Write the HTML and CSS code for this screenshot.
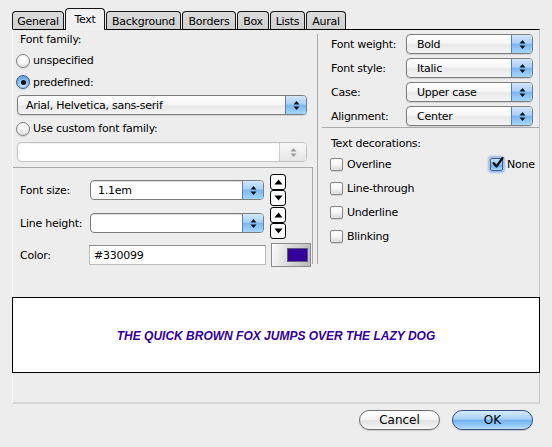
FILE: index.html
```html
<!DOCTYPE html>
<html>
<head>
<meta charset="utf-8">
<title>Text style</title>
<link rel="stylesheet" href="styles.css">
</head>
<body>
<div class="dialog">
  <div class="tabs">
    <div class="tab t-general">General</div>
    <div class="tab t-text active">Text</div>
    <div class="tab t-bg">Background</div>
    <div class="tab t-borders">Borders</div>
    <div class="tab t-box">Box</div>
    <div class="tab t-lists">Lists</div>
    <div class="tab t-aural">Aural</div>
  </div>
  <div class="panel">
    <div class="cols">
      <div class="left">
        <div class="family">
          <div class="label">Font family:</div>
          <label class="radio-row r1"><span class="radio"></span>unspecified</label>
          <label class="radio-row r2"><span class="radio on"></span>predefined:</label>
          <div class="popup wide"><span class="val">Arial, Helvetica, sans-serif</span><span class="arrows"><svg width="7" height="11" viewBox="0 0 7 11"><path d="M0.5 4.5 L3.5 1 L6.5 4.5 Z M0.5 6.5 L3.5 10 L6.5 6.5 Z" fill="#111"/></svg></span></div>
          <label class="radio-row r3"><span class="radio"></span>Use custom font family:</label>
          <div class="combo wide disabled"><span class="field"></span><span class="arrows gray"><svg width="7" height="11" viewBox="0 0 7 11"><path d="M0.5 4.5 L3.5 1 L6.5 4.5 Z M0.5 6.5 L3.5 10 L6.5 6.5 Z" fill="#9a9a9a"/></svg></span></div>
        </div>
        <div class="sizes">
          <div class="size-row">
            <span class="lbl">Font size:</span>
            <div class="combo size"><span class="field">1.1em</span><span class="arrows"><svg width="7" height="11" viewBox="0 0 7 11"><path d="M0.5 4.5 L3.5 1 L6.5 4.5 Z M0.5 6.5 L3.5 10 L6.5 6.5 Z" fill="#111"/></svg></span></div>
            <div class="steppers"><span class="step"><svg width="9" height="6" viewBox="0 0 9 6"><path d="M0.5 5.5 L4.5 0.5 L8.5 5.5 Z" fill="#000"/></svg></span><span class="step"><svg width="9" height="6" viewBox="0 0 9 6"><path d="M0.5 0.5 L4.5 5.5 L8.5 0.5 Z" fill="#000"/></svg></span></div>
          </div>
          <div class="size-row lh">
            <span class="lbl">Line height:</span>
            <div class="combo size"><span class="field"></span><span class="arrows"><svg width="7" height="11" viewBox="0 0 7 11"><path d="M0.5 4.5 L3.5 1 L6.5 4.5 Z M0.5 6.5 L3.5 10 L6.5 6.5 Z" fill="#111"/></svg></span></div>
            <div class="steppers"><span class="step"><svg width="9" height="6" viewBox="0 0 9 6"><path d="M0.5 5.5 L4.5 0.5 L8.5 5.5 Z" fill="#000"/></svg></span><span class="step"><svg width="9" height="6" viewBox="0 0 9 6"><path d="M0.5 0.5 L4.5 5.5 L8.5 0.5 Z" fill="#000"/></svg></span></div>
          </div>
          <div class="color-row">
            <span class="lbl">Color:</span>
            <div class="textfield">#330099</div>
            <div class="colorbtn"><span class="swatch"></span></div>
          </div>
        </div>
      </div>
      <div class="right">
        <div class="props">
          <div class="prop-row"><span class="plbl">Font weight:</span><div class="popup small"><span class="val">Bold</span><span class="arrows"><svg width="7" height="11" viewBox="0 0 7 11"><path d="M0.5 4.5 L3.5 1 L6.5 4.5 Z M0.5 6.5 L3.5 10 L6.5 6.5 Z" fill="#111"/></svg></span></div></div>
          <div class="prop-row"><span class="plbl">Font style:</span><div class="popup small"><span class="val">Italic</span><span class="arrows"><svg width="7" height="11" viewBox="0 0 7 11"><path d="M0.5 4.5 L3.5 1 L6.5 4.5 Z M0.5 6.5 L3.5 10 L6.5 6.5 Z" fill="#111"/></svg></span></div></div>
          <div class="prop-row"><span class="plbl">Case:</span><div class="popup small"><span class="val">Upper case</span><span class="arrows"><svg width="7" height="11" viewBox="0 0 7 11"><path d="M0.5 4.5 L3.5 1 L6.5 4.5 Z M0.5 6.5 L3.5 10 L6.5 6.5 Z" fill="#111"/></svg></span></div></div>
          <div class="prop-row"><span class="plbl">Alignment:</span><div class="popup small"><span class="val">Center</span><span class="arrows"><svg width="7" height="11" viewBox="0 0 7 11"><path d="M0.5 4.5 L3.5 1 L6.5 4.5 Z M0.5 6.5 L3.5 10 L6.5 6.5 Z" fill="#111"/></svg></span></div></div>
        </div>
        <div class="sep"></div>
        <div class="deco">
          <div class="deco-title">Text decorations:</div>
          <div class="deco-row">
            <label class="check-item first"><span class="check"></span>Overline</label>
            <label class="check-item"><span class="check on"><svg width="13" height="12" viewBox="0 0 13 12"><path d="M2.5 6 L5.5 9.5 L11.5 1" fill="none" stroke="#111" stroke-width="2.2" stroke-linecap="round" stroke-linejoin="round"/></svg></span>None</label>
          </div>
          <div class="deco-row"><label class="check-item first"><span class="check"></span>Line-through</label></div>
          <div class="deco-row"><label class="check-item first"><span class="check"></span>Underline</label></div>
          <div class="deco-row"><label class="check-item first"><span class="check"></span>Blinking</label></div>
        </div>
      </div>
    </div>
    <div class="preview"><span class="sample">The quick brown fox jumps over the lazy dog</span></div>
  </div>
  <div class="buttons">
    <button class="btn">Cancel</button>
    <button class="btn ok">OK</button>
  </div>
</div>
</body>
</html>
```

FILE: styles.css
```css
html, body {
  margin: 0;
  padding: 0;
}
body {
  background: #ededed;
  font-family: "DejaVu Sans", "Noto Sans", sans-serif;
  font-size: 11px;
  letter-spacing: -0.25px;
  color: #000;
}
.dialog {
  width: 552px;
  height: 447px;
  overflow: hidden;
}

/* tabs */
.tabs {
  display: flex;
  align-items: flex-end;
  height: 21px;
  margin-top: 8px;
  padding-left: 12px;
  position: relative;
  z-index: 2;
}
.tab {
  box-sizing: border-box;
  height: 18px;
  border: 1px solid #161616;
  border-bottom: none;
  border-radius: 4px 4px 0 0;
  background: linear-gradient(#dcdcdc, #d0d0d0);
  display: flex;
  align-items: center;
  justify-content: center;
  margin-right: 1px;
  padding-top: 1px;
}
.tab.active {
  height: 22px;
  margin-bottom: -1px;
  background: #f1f1f1;
  padding-bottom: 2px;
}
.t-general { width: 52px; }
.t-text { width: 40px; }
.t-bg { width: 75px; }
.t-borders { width: 54px; }
.t-box { width: 32px; }
.t-lists { width: 35px; }
.t-aural { width: 40px; }

/* panel */
.panel {
  box-sizing: border-box;
  margin-left: 12px;
  width: 528px;
  height: 375px;
  border-top: 1px solid #000;
  border-left: 1px solid #fafafa;
  border-right: 1px solid #c6c6c6;
  border-bottom: 2px solid #d6d6d6;
  display: flex;
  flex-direction: column;
}
.cols {
  display: flex;
  height: 234px;
}
.left {
  width: 300px;
  display: flex;
  flex-direction: column;
}
.family {
  box-sizing: border-box;
  height: 138px;
  border-bottom: 1px solid #a9a9a9;
  display: flex;
  flex-direction: column;
}
.label {
  height: 20px;
  line-height: 20px;
  padding-left: 7px;
}
.radio-row {
  display: flex;
  align-items: center;
  gap: 3px;
  padding-left: 3px;
  height: 21px;
}
.r2 { height: 22px; }
.r3 { margin-top: 3px; }
.radio {
  box-sizing: border-box;
  width: 14px;
  height: 14px;
  border-radius: 50%;
  border: 1px solid #838383;
  background: radial-gradient(circle at 50% 30%, #ffffff 0%, #f4f4f4 45%, #d2d2d2 100%);
  box-shadow: 0 1px 1px rgba(0,0,0,0.12);
  display: flex;
  align-items: center;
  justify-content: center;
}
.radio.on {
  border-color: #3f5f8e;
  background: radial-gradient(circle at 50% 75%, #cfe8ff 0%, #7fb6ec 55%, #4f8fd6 100%);
}
.radio.on::after {
  content: "";
  width: 5px;
  height: 5px;
  border-radius: 50%;
  background: #111;
}

/* popup buttons */
.popup {
  box-sizing: border-box;
  height: 20px;
  border: 1px solid #7d7d7d;
  border-radius: 4px;
  background: linear-gradient(#ffffff 0%, #f6f6f6 45%, #e9e9e9 55%, #f3f3f3 100%);
  display: flex;
  align-items: center;
  overflow: hidden;
  box-shadow: 0 1px 1px rgba(0,0,0,0.12);
}
.popup .val {
  flex: 1;
  padding-left: 10px;
  white-space: nowrap;
}
.popup.wide {
  width: 290px;
  margin-left: 4px;
  margin-top: 2px;
}
.popup.wide .val { padding-left: 8px; }
.arrows {
  width: 20px;
  height: 100%;
  display: flex;
  align-items: center;
  justify-content: center;
  border-left: 1px solid #5b7fb2;
  background: linear-gradient(#d2e8fd 0%, #a8d0f7 45%, #7ab7f1 52%, #a6d6fc 100%);
}
.arrows.gray {
  border-left: 1px solid #d0d0d0;
  background: linear-gradient(#f8f8f8, #e6e6e6);
}

/* combo boxes */
.combo {
  box-sizing: border-box;
  height: 20px;
  display: flex;
  border: 1px solid #7d7d7d;
  border-radius: 4px;
  overflow: hidden;
  background: #fff;
}
.combo .field {
  flex: 1;
  display: flex;
  align-items: center;
  padding-left: 7px;
  box-shadow: inset 0 1px 1px rgba(0,0,0,0.15);
}
.combo.wide {
  width: 290px;
  margin-left: 4px;
  margin-top: 3px;
}
.combo.disabled {
  border-color: #c3c3c3;
}
.combo.disabled .field {
  box-shadow: inset 0 1px 1px rgba(0,0,0,0.06);
}
.combo.disabled .arrows {
  width: 26px;
}
.combo.size {
  width: 174px;
}

/* sizes */
.sizes {
  box-sizing: border-box;
  width: 300px;
  height: 96px;
  border-right: 1px solid #a9a9a9;
  padding-top: 6px;
  display: flex;
  flex-direction: column;
}
.size-row {
  height: 32px;
  display: flex;
  align-items: center;
  padding-left: 7px;
}
.size-row.lh {
  margin-top: 1px;
}
.lbl {
  width: 70px;
  flex: none;
}
.steppers {
  display: flex;
  flex-direction: column;
  margin-left: 6px;
}
.step {
  box-sizing: border-box;
  width: 16px;
  height: 16px;
  border: 1px solid #000;
  border-radius: 3px;
  background: #fff;
  display: flex;
  align-items: center;
  justify-content: center;
}
.step + .step {
  margin-top: 0;
}
.color-row {
  margin-top: 4px;
  height: 24px;
  display: flex;
  align-items: center;
  padding-left: 7px;
}
.textfield {
  box-sizing: border-box;
  width: 177px;
  height: 20px;
  margin-left: -1px;
  border: 1px solid #bcbcbc;
  border-top-color: #8e8e8e;
  background: #fff;
  padding-left: 4px;
  display: flex;
  align-items: center;
}
.colorbtn {
  box-sizing: border-box;
  width: 40px;
  height: 24px;
  margin-left: 5px;
  border: 1px solid #8a8a8a;
  background: linear-gradient(100deg, #fbfbfb 0%, #dedede 40%, #b9b9b9 100%);
  display: flex;
  align-items: center;
  justify-content: flex-end;
  padding-right: 3px;
}
.swatch {
  width: 19px;
  height: 12px;
  background: #330099;
  box-shadow: 0 0 0 1px #5e5e7a;
}

/* right column */
.right {
  box-sizing: border-box;
  flex: 1;
  margin-left: 4px;
  margin-top: 4px;
  height: 230px;
  border-left: 1px solid #a9a9a9;
  display: flex;
  flex-direction: column;
}
.props {
  padding-left: 13px;
  display: flex;
  flex-direction: column;
  gap: 4px;
}
.prop-row {
  height: 20px;
  display: flex;
  align-items: center;
}
.plbl {
  width: 75px;
  flex: none;
}
.popup.small {
  width: 127px;
}
.sep {
  margin: 1px 0 0 4px;
  border-top: 1px solid #a9a9a9;
}
.deco {
  padding-top: 8px;
  padding-left: 12px;
  display: flex;
  flex-direction: column;
}
.deco-title {
  height: 16px;
  line-height: 16px;
  padding-left: 1px;
}
.deco-row {
  height: 24px;
  display: flex;
  align-items: center;
}
.check-item {
  display: flex;
  align-items: center;
  gap: 4px;
}
.check-item.first {
  width: 160px;
}
.check {
  box-sizing: border-box;
  width: 13px;
  height: 13px;
  border: 1px solid #878787;
  border-radius: 2px;
  background: linear-gradient(#ffffff 0%, #f3f3f3 50%, #dcdcdc 100%);
  box-shadow: 0 1px 1px rgba(0,0,0,0.12);
  position: relative;
}
.check.on {
  border-color: #3e5e93;
  background: linear-gradient(#c9e2fb 0%, #8cc0f2 50%, #6aa8ea 55%, #a7d3fb 100%);
  box-shadow: 0 0 2px 2px rgba(90, 150, 220, 0.55);
}
.check.on svg {
  position: absolute;
  left: 0;
  top: -2px;
}

/* preview */
.preview {
  box-sizing: border-box;
  margin: 33px -1px 0;
  height: 76px;
  border: 1px solid #000;
  background: #fff;
  display: flex;
  align-items: center;
  justify-content: center;
}
.sample {
  font-family: "Liberation Sans", Arial, sans-serif;
  font-weight: bold;
  font-style: italic;
  font-size: 12px;
  letter-spacing: 0;
  text-transform: uppercase;
  color: #330099;
  margin-top: 2px;
}

/* buttons */
.buttons {
  display: flex;
  justify-content: flex-end;
  gap: 12px;
  padding-right: 19px;
  margin-top: 6px;
}
.btn {
  box-sizing: border-box;
  width: 81px;
  height: 20px;
  border-radius: 10px;
  border: 1px solid #6e6e6e;
  background: linear-gradient(#ffffff 0%, #f5f5f5 45%, #e2e2e2 55%, #f7f7f7 100%);
  font-family: "DejaVu Sans", sans-serif;
  font-size: 12px;
  color: #000;
  padding: 0;
  box-shadow: 0 1px 1px rgba(0,0,0,0.15);
}
.btn.ok {
  border-color: #304e80;
  background: linear-gradient(#d6ebfe 0%, #a7d0f6 45%, #75b3ef 52%, #9bcffb 85%, #c4e4fd 100%);
}
```
